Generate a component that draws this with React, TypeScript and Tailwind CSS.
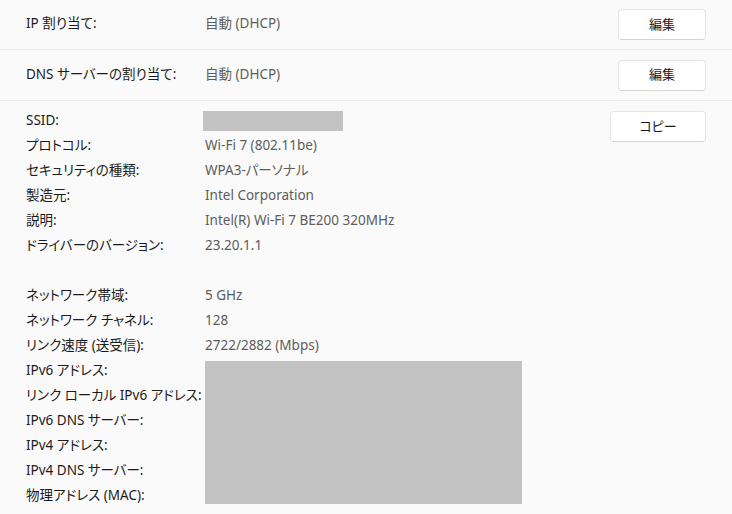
import React from "react";

const font = "font-['Noto_Sans','Noto_Sans_CJK_JP',sans-serif] [font-feature-settings:'palt']";

function Btn({ children, w }: { children: React.ReactNode; w: string }) {
  return (
    <button
      className={`${w} h-[31px] rounded-[4px] bg-white border border-[#e5e5e5] border-b-[#d4d4d4] text-[13px] text-[#1b1b1b] flex items-center justify-center`}
    >
      {children}
    </button>
  );
}

function Label({ children }: { children: React.ReactNode }) {
  return <div className="h-[25px] flex items-center text-[#1b1b1b] whitespace-nowrap">{children}</div>;
}
function Val({ children }: { children: React.ReactNode }) {
  return <div className="h-[25px] flex items-center text-[#5d5d5d]">{children}</div>;
}

export default function App() {
  return (
    <div className={`w-[732px] h-[514px] bg-[#fafafa] text-[13.5px] overflow-hidden ${font}`}>
      <div className="h-[49px] flex items-center pl-[26px] pr-[26px] border-b border-[#ebebeb] box-content">
        <div className="w-[179px] text-[#1b1b1b] -mt-[2px]">IP 割り当て:</div>
        <div className="flex-1 text-[#5d5d5d] -mt-[2px]">自動 (DHCP)</div>
        <Btn w="w-[88px]">編集</Btn>
      </div>
      <div className="h-[50px] flex items-center pl-[26px] pr-[26px] border-b border-[#ebebeb] box-content">
        <div className="w-[179px] text-[#1b1b1b] -mt-[2px]">DNS サーバーの割り当て:</div>
        <div className="flex-1 text-[#5d5d5d] -mt-[2px]">自動 (DHCP)</div>
        <Btn w="w-[88px]">編集</Btn>
      </div>
      <div className="flex pl-[26px] pr-[26px] pt-[7px]">
        <div className="grid grid-cols-[179px_320px] grid-rows-[repeat(16,25px)]">
          <Label>SSID:</Label>
          <div className="h-[25px] flex items-center">
            <div className="-ml-[2px] w-[140px] h-[20px] bg-[#c2c2c2]" />
          </div>
          <Label>プロトコル:</Label>
          <Val>Wi-Fi 7 (802.11be)</Val>
          <Label>セキュリティの種類:</Label>
          <Val>WPA3-パーソナル</Val>
          <Label>製造元:</Label>
          <Val>Intel Corporation</Val>
          <Label>説明:</Label>
          <Val>Intel(R) Wi-Fi 7 BE200 320MHz</Val>
          <Label>ドライバーのバージョン:</Label>
          <Val>23.20.1.1</Val>
          <div className="h-[25px]" />
          <div className="h-[25px]" />
          <Label>ネットワーク帯域:</Label>
          <Val>5 GHz</Val>
          <Label>ネットワーク チャネル:</Label>
          <Val>128</Val>
          <Label>リンク速度 (送受信):</Label>
          <Val>2722/2882 (Mbps)</Val>
          <Label>IPv6 アドレス:</Label>
          <div className="row-span-6 col-start-2 pt-[3px] pb-[4px]">
            <div className="w-[317px] h-full bg-[#c2c2c2]" />
          </div>
          <Label>リンク ローカル IPv6 アドレス:</Label>
          <Label>IPv6 DNS サーバー:</Label>
          <Label>IPv4 アドレス:</Label>
          <Label>IPv4 DNS サーバー:</Label>
          <Label>物理アドレス (MAC):</Label>
        </div>
        <div className="flex-1 flex justify-end pt-[3px]">
          <Btn w="w-[96px]">コピー</Btn>
        </div>
      </div>
    </div>
  );
}
